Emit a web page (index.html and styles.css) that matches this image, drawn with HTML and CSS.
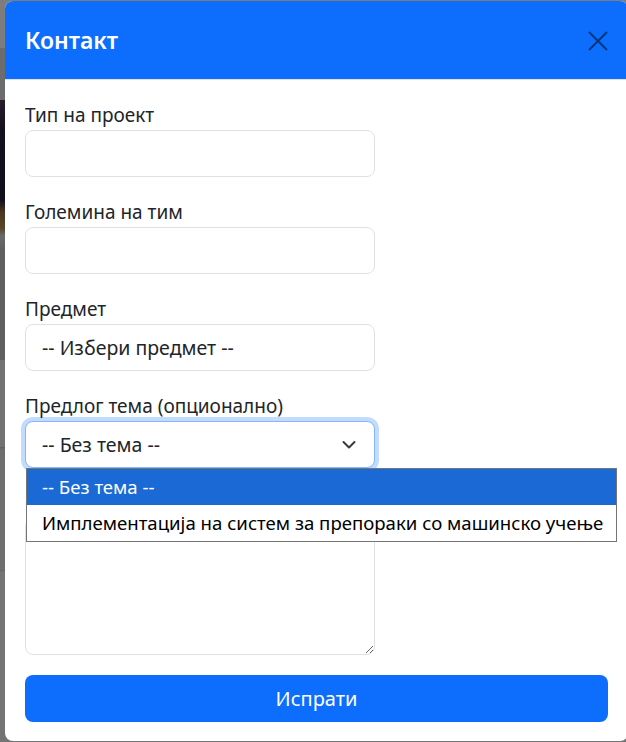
FILE: index.html
```html
<!DOCTYPE html>
<html lang="mk">
<head>
<meta charset="utf-8">
<title>Контакт</title>
<link rel="stylesheet" href="styles.css">
</head>
<body>
<div class="modal">
  <div class="modal-header">
    <h5 class="modal-title">Контакт</h5>
    <button class="btn-close" type="button" aria-label="Затвори">
      <svg width="20" height="20" viewBox="0 0 20 20"><path d="M1 1 L19 19 M19 1 L1 19" stroke="currentColor" stroke-width="2" fill="none"/></svg>
    </button>
  </div>
  <div class="modal-body">
    <div class="field">
      <label class="label">Тип на проект</label>
      <input class="control" type="text">
    </div>
    <div class="field">
      <label class="label">Големина на тим</label>
      <input class="control" type="text">
    </div>
    <div class="field">
      <label class="label">Предмет</label>
      <div class="control select-plain">-- Избери предмет --</div>
    </div>
    <div class="field field-topic">
      <label class="label">Предлог тема (опционално)</label>
      <div class="control select focus">
        <span>-- Без тема --</span>
        <svg class="chev" width="14" height="10" viewBox="0 0 14 10"><path d="M1.5 2 L7 7.5 L12.5 2" stroke="#343a40" stroke-width="2" fill="none" stroke-linecap="round" stroke-linejoin="round"/></svg>
      </div>
      <div class="options">
        <div class="option selected">-- Без тема --</div>
        <div class="option">Имплементација на систем за препораки со машинско учење</div>
      </div>
    </div>
    <div class="field">
      <label class="label">Опис</label>
      <textarea class="control textarea"></textarea>
    </div>
    <button class="submit" type="button">Испрати</button>
  </div>
</div>
</body>
</html>
```
FILE: styles.css
```css
html, body {
  margin: 0;
  padding: 0;
  height: 742px;
  overflow: hidden;
}
body {
  font-family: "Noto Sans", "Liberation Sans", sans-serif;
  color: #212529;
  background: linear-gradient(to bottom,
    #7d7d7d 0, #7d7d7d 48px,
    #6b6c6b 48px, #6b6c6b 100px,
    #2a1d2a 100px, #14101e 130px, #120e1c 200px,
    #4a3620 212px, #5a4526 228px,
    #6a6a6a 236px, #5e605f 250px, #5e605f 360px,
    #727272 360px, #727272 447px,
    #5c5c5c 447px, #6e6e6e 449px, #6e6e6e 570px,
    #646464 570px, #747474 572px, #747474 742px);
}
.modal {
  margin: 1px 0 0 5px;
  width: 623px;
  height: 740px;
  background: #fff;
  border-radius: 8px;
  overflow: hidden;
  position: relative;
}
.modal-header {
  height: 79px;
  box-sizing: border-box;
  padding: 0 20px;
  background: #0d6efd;
  border-bottom: 1px solid #dee2e6;
  display: flex;
  align-items: center;
  justify-content: space-between;
}
.modal-title {
  margin: 0 0 -2px;
  color: #fff;
  font-size: 23px;
  font-weight: 600;
  line-height: 1.2;
}
.btn-close {
  border: 0;
  background: transparent;
  padding: 0;
  width: 20px;
  height: 20px;
  color: #063780;
  display: flex;
  margin-top: 1px;
}
.modal-body {
  padding: 20px 20px 0;
  position: relative;
}
.field {
  margin-bottom: 20px;
}
.field-topic {
  position: relative;
}
.label {
  display: block;
  font-size: 19px;
  line-height: 30px;
  margin-bottom: 0;
}
.control {
  display: block;
  box-sizing: border-box;
  width: 350px;
  height: 47px;
  border: 1px solid #dee2e6;
  border-radius: 8px;
  background: #fff;
  padding: 0 16px;
  font-family: inherit;
  font-size: 19.5px;
  color: #212529;
  margin: 0;
}
.select-plain {
  display: flex;
  align-items: center;
}
.select {
  display: flex;
  align-items: center;
  justify-content: space-between;
  padding-right: 18px;
}
.focus {
  border-color: #86b7fe;
  box-shadow: 0 0 0 4px rgba(13, 110, 253, 0.25);
}
.chev {
  display: block;
}
.textarea {
  height: 137px;
  resize: vertical;
}
.options {
  position: absolute;
  left: 1px;
  top: 77px;
  width: 591px;
  box-sizing: border-box;
  border: 1px solid #767676;
  background: #fff;
  z-index: 2;
  overflow: hidden;
}
.option {
  height: 36px;
  line-height: 36px;
  padding-left: 15px;
  font-size: 18.6px;
  color: #000;
  white-space: nowrap;
}
.option.selected {
  background: #1a69d4;
  color: #fff;
}
.submit {
  display: block;
  width: 100%;
  height: 47px;
  border: 0;
  border-radius: 8px;
  background: #0d6efd;
  color: #fff;
  font-family: inherit;
  font-size: 20px;
}
```
